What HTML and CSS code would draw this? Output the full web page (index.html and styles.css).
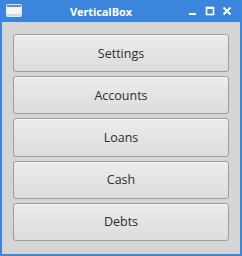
FILE: index.html
```html
<!DOCTYPE html>
<html lang="en">
  <head>
    <meta charset="UTF-8" />
    <title>VerticalBox</title>
    <link rel="stylesheet" href="styles.css">
  </head>
  <body>
    <div class="window">
      <div class="titlebar">
        <svg class="app-icon" width="16" height="13" viewBox="0 0 16 13">
          <rect x="0.5" y="0.5" width="15" height="12" rx="1" fill="#f4f4f4" stroke="#dfe7f3"/>
          <rect x="1" y="1" width="14" height="2" fill="#5c8fd2"/>
          <rect x="1" y="10" width="14" height="2" fill="#d8d8d8"/>
        </svg>
        <span class="title">VerticalBox</span>
        <div class="controls">
          <svg width="10" height="10" viewBox="0 0 10 10">
            <rect x="1" y="7" width="7" height="2" fill="#fff"/>
          </svg>
          <svg width="10" height="10" viewBox="0 0 10 10">
            <rect x="1.5" y="1.5" width="7" height="7" fill="none" stroke="#fff" stroke-width="1.6"/>
            <rect x="1" y="1" width="8" height="2" fill="#fff"/>
          </svg>
          <svg width="10" height="10" viewBox="0 0 10 10">
            <path d="M1.5 1.5 L8.5 8.5 M8.5 1.5 L1.5 8.5" stroke="#fff" stroke-width="2"/>
          </svg>
        </div>
      </div>
      <div class="content">
        <button class="btn">Settings</button>
        <button class="btn">Accounts</button>
        <button class="btn">Loans</button>
        <button class="btn">Cash</button>
        <button class="btn">Debts</button>
      </div>
    </div>
  </body>
</html>
```

FILE: styles.css
```css
html,
body {
  margin: 0;
  width: 242px;
  height: 256px;
  overflow: hidden;
}

.window {
  width: 242px;
  height: 256px;
  box-sizing: border-box;
  background: #3b86dc;
  padding: 0 2px 2px 2px;
  display: flex;
  flex-direction: column;
}

.titlebar {
  height: 22px;
  position: relative;
  display: flex;
  align-items: center;
  padding-left: 68px;
}

.app-icon {
  position: absolute;
  left: 4px;
  top: 4px;
}

.title {
  color: #fff;
  font-family: "Open Sans", sans-serif;
  font-weight: bold;
  font-size: 11px;
  letter-spacing: -0.1px;
}

.controls {
  position: absolute;
  right: 8px;
  top: 6px;
  display: flex;
  gap: 7px;
}

.controls svg {
  display: block;
}

.content {
  flex: 1;
  background: #d5d5d5;
  padding: 12px 11px 13px 11px;
  display: flex;
  flex-direction: column;
  gap: 4px;
}

.btn {
  flex: 1;
  border: 1px solid #9d9d9d;
  border-radius: 3px;
  background: linear-gradient(to bottom, #ececec, #dcdcdc);
  box-shadow: inset 0 1px 0 #f6f6f6;
  color: #2e2e2e;
  font-family: "Open Sans", sans-serif;
  font-size: 12.5px;
  padding: 0;
}
```
